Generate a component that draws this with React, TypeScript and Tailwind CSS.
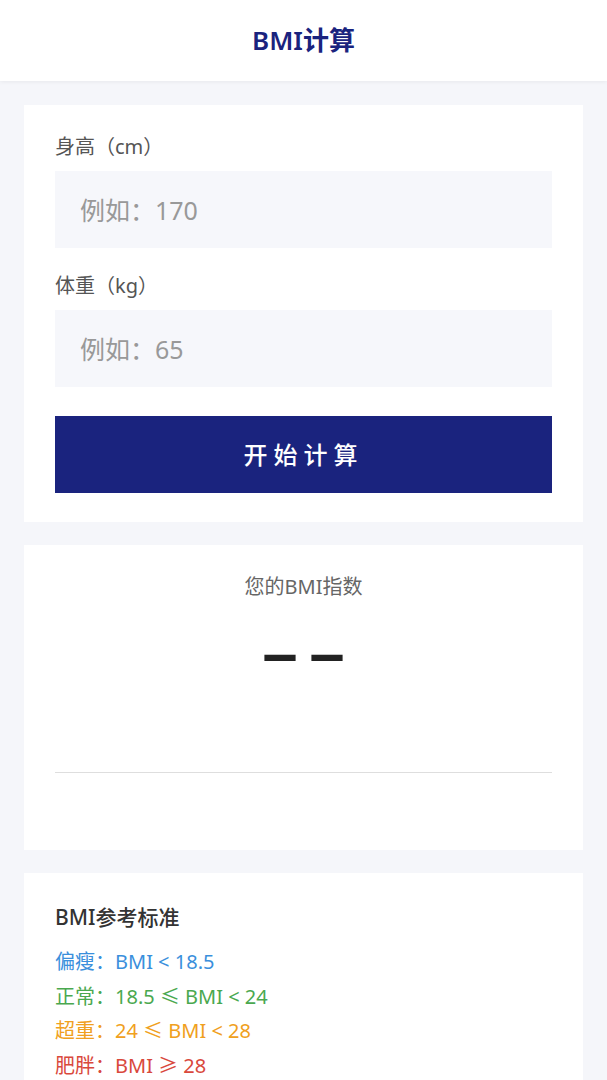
import { useState } from 'react';

const font = { fontFamily: '"Noto Sans", "Noto Sans CJK SC", sans-serif' };

const levels = [
  { text: '偏瘦：BMI < 18.5', color: 'text-[#3a8fdc]' },
  { text: '正常：18.5 ≤ BMI < 24', color: 'text-[#4aa84f]' },
  { text: '超重：24 ≤ BMI < 28', color: 'text-[#f0a020]' },
  { text: '肥胖：BMI ≥ 28', color: 'text-[#d9483c]' },
];

function Field({ label, placeholder, value, onChange, first }: { label: string; placeholder: string; value: string; onChange: (v: string) => void; first?: boolean }) {
  return (
    <div className={first ? '' : 'mt-[26px]'}>
      <div className="text-[20px] leading-6 text-[#555555]">{label}</div>
      <input
        value={value}
        onChange={(e) => onChange(e.target.value)}
        placeholder={placeholder}
        className="mt-3 block h-[77px] w-full bg-[#f6f7fb] px-[25px] text-[25px] text-[#333333] outline-none placeholder:text-[#999999]"
      />
    </div>
  );
}

export default function App() {
  const [height, setHeight] = useState('');
  const [weight, setWeight] = useState('');
  const [bmi, setBmi] = useState<string | null>(null);

  const calc = () => {
    const h = parseFloat(height) / 100;
    const w = parseFloat(weight);
    if (h > 0 && w > 0) setBmi((w / (h * h)).toFixed(1));
  };

  return (
    <div className="min-h-[1080px] bg-[#f5f6fa]" style={font}>
      <header className="flex h-[81px] items-center justify-center bg-white shadow-[0_1px_4px_rgba(0,0,0,0.06)]">
        <h1 className="text-[26px] font-semibold text-[#1a237e]">BMI计算</h1>
      </header>

      <div className="mx-6 mt-6 flex flex-col gap-[23px]">
        <section className="bg-white px-[31px] pt-[30px] pb-[29px]">
          <Field first label="身高（cm）" placeholder="例如：170" value={height} onChange={setHeight} />
          <Field label="体重（kg）" placeholder="例如：65" value={weight} onChange={setWeight} />
          <button
            onClick={calc}
            className="mt-[29px] flex h-[77px] w-full items-center justify-center bg-[#1a237e] text-[24px] font-medium tracking-[6px] text-white"
          >
            开始计算
          </button>
        </section>

        <section className="bg-white px-[31px] pt-[30px]">
          <div className="text-center text-[20px] leading-6 text-[#666666]">您的BMI指数</div>
          <div className="mt-[22px] flex h-[64px] items-center justify-center">
            {bmi ? (
              <span className="text-[48px] font-bold text-[#222222]">{bmi}</span>
            ) : (
              <span className="flex gap-3 text-[63px] font-bold leading-none text-[#222222]" style={{ fontFamily: '"Liberation Sans", sans-serif' }}>
                <span>–</span>
                <span>–</span>
              </span>
            )}
          </div>
          <div className="mt-[87px] h-px bg-[#dedede]" />
          <div className="h-[77px]" />
        </section>

        <section className="bg-white px-[31px] pt-[30px] pb-6">
          <h2 className="text-[21px] font-medium leading-7 text-[#333333]">BMI参考标准</h2>
          <ul className="mt-[14px]">
            {levels.map((l) => (
              <li key={l.text} className={`text-[20px] leading-[34.5px] ${l.color}`}>
                {l.text}
              </li>
            ))}
          </ul>
        </section>
      </div>
    </div>
  );
}
